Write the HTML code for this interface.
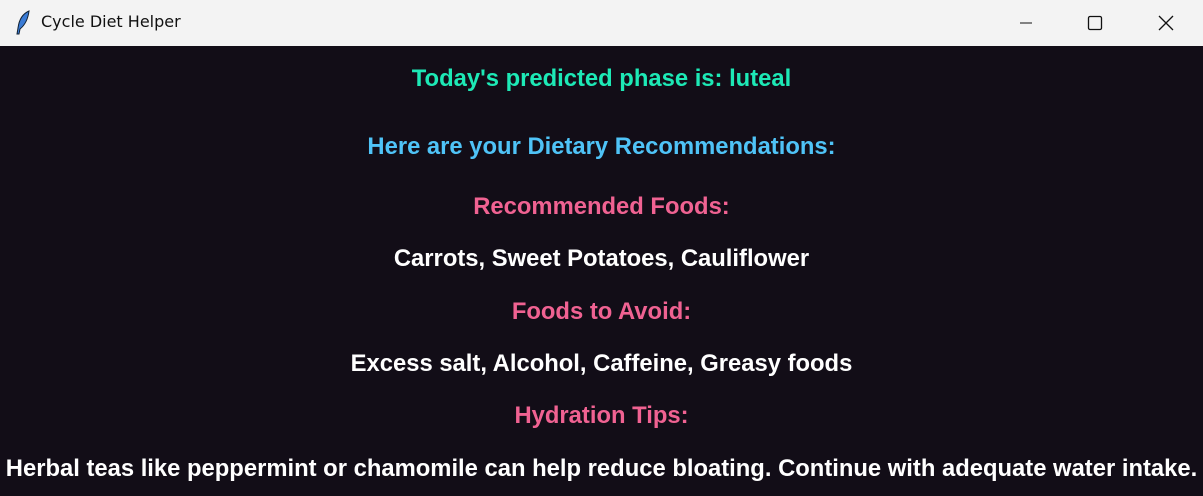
<!DOCTYPE html>
<html><head><style>
html,body{margin:0;padding:0;width:1203px;height:496px;overflow:hidden;background:#120d17;font-family:"Liberation Sans",Arial,sans-serif;}
.tb{position:absolute;left:0;top:0;width:1203px;height:46px;background:#f3f3f3;}
.tb .t{position:absolute;left:41px;top:12px;color:#111;font-family:"DejaVu Sans","Liberation Sans",sans-serif;font-size:16px;}
.l{position:absolute;left:0;width:1203px;text-align:center;font-weight:bold;font-size:23.8px;white-space:nowrap;line-height:26px;}
</style></head><body>
<div class="tb">
<svg style="position:absolute;left:14px;top:10px" width="18" height="26" viewBox="0 0 18 26"><path d="M15 1 C8 4 5 10 4 18 L3 24 L5 24 L6 19 C11 15 14 9 15 1Z" fill="#3a7bd5" stroke="#123" stroke-width="1"/></svg>
<div class="t">Cycle Diet Helper</div>
<svg style="position:absolute;left:1018px;top:15px" width="16" height="16"><line x1="2" y1="8" x2="14" y2="8" stroke="#111" stroke-width="1"/></svg>
<svg style="position:absolute;left:1087px;top:15px" width="16" height="16"><rect x="1.5" y="1.5" width="13" height="13" rx="1.5" fill="none" stroke="#111" stroke-width="1.3"/></svg>
<svg style="position:absolute;left:1157px;top:14px" width="18" height="18"><path d="M2 2L16 16M16 2L2 16" stroke="#111" stroke-width="1.3"/></svg>
</div>
<div class="l" style="top:66px;color:#1de9b6">Today's predicted phase is: luteal</div>
<div class="l" style="top:134px;color:#4fc3f7">Here are your Dietary Recommendations:</div>
<div class="l" style="top:194px;color:#f06292">Recommended Foods:</div>
<div class="l" style="top:246px;color:#fff">Carrots, Sweet Potatoes, Cauliflower</div>
<div class="l" style="top:299px;color:#f06292">Foods to Avoid:</div>
<div class="l" style="top:351px;color:#fff">Excess salt, Alcohol, Caffeine, Greasy foods</div>
<div class="l" style="top:403px;color:#f06292">Hydration Tips:</div>
<div class="l" style="top:456px;color:#fff">Herbal teas like peppermint or chamomile can help reduce bloating. Continue with adequate water intake.</div>
</body></html>
